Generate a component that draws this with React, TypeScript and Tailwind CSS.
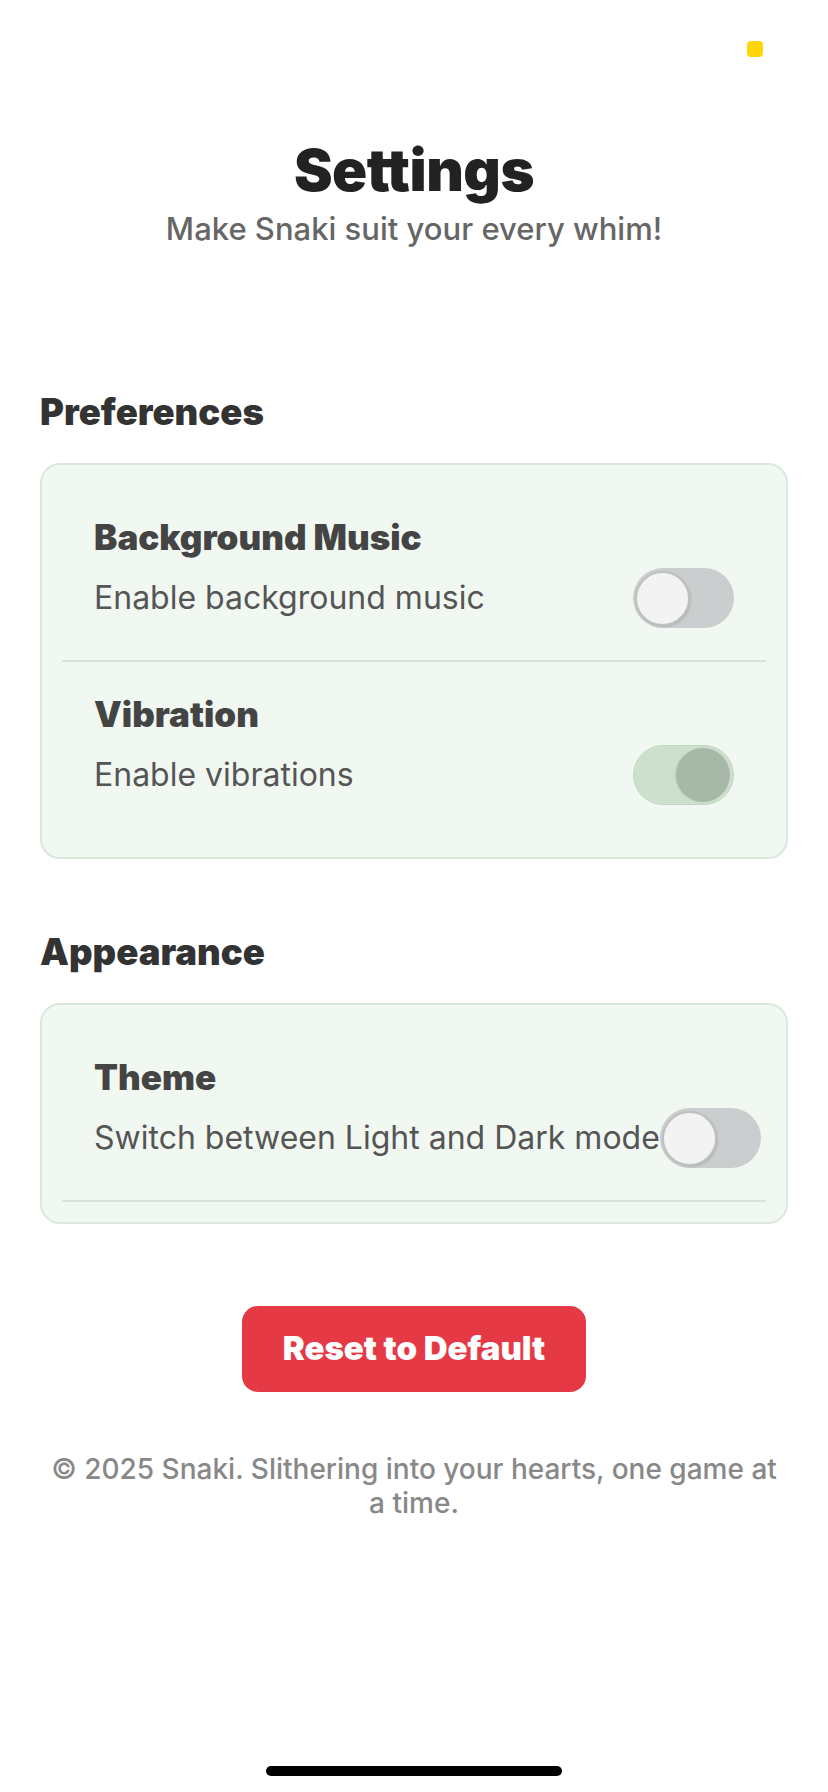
import React from "react";

function Toggle({ on }: { on: boolean }) {
  return (
    <div
      className={
        on
          ? "flex h-[60px] w-[101px] shrink-0 items-center justify-end rounded-full border border-[#c3d6c4] bg-[#cce0cd] px-[3px]"
          : "flex h-[60px] w-[101px] shrink-0 items-center justify-start rounded-full bg-[#cbcece] px-[2px]"
      }
    >
      <div
        className={
          on
            ? "h-[54px] w-[54px] rounded-full bg-[#a8b8a8] shadow-[-1px_0_2px_rgba(0,0,0,0.08)]"
            : "h-[55px] w-[55px] rounded-full border-2 border-[#bfc1c1] bg-[#f3f3f3] shadow-[1px_1px_2px_rgba(0,0,0,0.12)]"
        }
      />
    </div>
  );
}

function Row({
  title,
  desc,
  on,
  border,
}: {
  title: string;
  desc: string;
  on: boolean;
  border: boolean;
}) {
  return (
    <div className={border ? "border-b-2 border-[#d7e3d8] px-8 py-8" : "px-8 py-8"}>
      <div className="text-[35px] leading-[41px] font-black text-[#444444]">{title}</div>
      <div className="mt-[10px] flex items-center justify-between">
        <span className="shrink-0 whitespace-nowrap text-[32px] leading-[36px] font-normal text-[#555555]">
          {desc}
        </span>
        <Toggle on={on} />
      </div>
    </div>
  );
}

export default function App() {
  return (
    <div className="relative min-h-[1792px] w-full bg-white font-['Inter','Liberation_Sans',sans-serif]">
      <div className="flex justify-end pr-[65px] pt-[41px]">
        <div className="h-4 w-4 rounded-[4px] bg-[#ffd60a]" />
      </div>

      <div className="px-10">
        <div className="mt-[79px] flex flex-col items-center">
          <h1 className="text-[58px] leading-[68px] font-black tracking-[-0.5px] text-[#222222]">Settings</h1>
          <p className="mt-[7px] text-[31px] leading-[36px] font-medium text-[#666666]">
            Make Snaki suit your every whim!
          </p>
        </div>

        <h2 className="mt-[143px] text-[36.5px] leading-[44px] font-black text-[#333333]">Preferences</h2>
        <div className="mt-[29px] rounded-[20px] border-2 border-[#dbe8dc] bg-[#f1f8f2] px-5 py-5">
          <Row title="Background Music" desc="Enable background music" on={false} border />
          <Row title="Vibration" desc="Enable vibrations" on border={false} />
        </div>

        <h2 className="mt-[71px] text-[36.5px] leading-[44px] font-black text-[#333333]">Appearance</h2>
        <div className="mt-[29px] rounded-[20px] border-2 border-[#dbe8dc] bg-[#f1f8f2] px-5 py-5">
          <Row title="Theme" desc="Switch between Light and Dark mode" on={false} border />
        </div>

        <div className="mt-[82px] flex justify-center">
          <button className="flex h-[86px] w-[344px] items-center justify-center rounded-[16px] bg-[#e63946] text-[33px] font-black text-white">
            Reset to Default
          </button>
        </div>

        <p className="mt-[60px] text-center text-[28px] leading-[34px] font-medium text-[#888888]">
          © 2025 Snaki. Slithering into your hearts, one game at
          <br />
          a time.
        </p>
      </div>

      <div className="absolute bottom-[16px] left-[266px] h-[10px] w-[296px] rounded-full bg-black" />
    </div>
  );
}
